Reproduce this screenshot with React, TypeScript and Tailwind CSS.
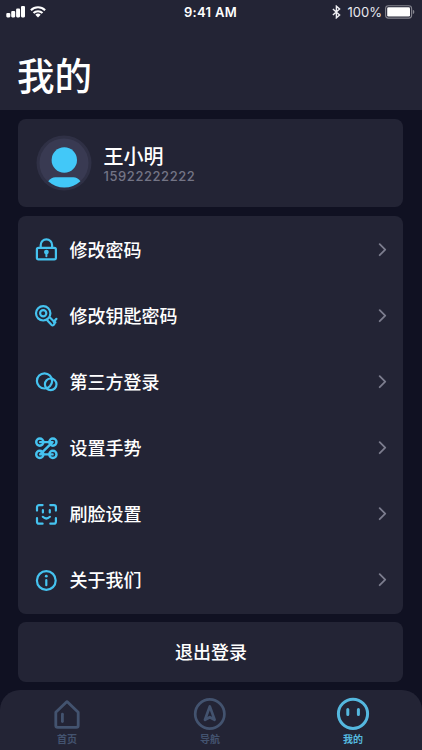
import type { ReactNode } from "react";

const CYAN = "#45c3f0";

function MenuSvg({ children }: { children: ReactNode }) {
  return (
    <svg width="24" height="24" viewBox="0 0 24 24" fill="none" stroke={CYAN} strokeWidth="2.2" strokeLinecap="round" strokeLinejoin="round" className="shrink-0">
      {children}
    </svg>
  );
}

const menu: { label: string; icon: ReactNode }[] = [
  {
    label: "修改密码",
    icon: (
      <MenuSvg>
        <rect x="2.9" y="9.8" width="19" height="11.6" rx="1.6" />
        <path d="M6.7 9.6V7a5.7 5.7 0 0 1 11.4 0V9.6" />
        <circle cx="12.4" cy="14.1" r="2.4" fill={CYAN} stroke="none" />
        <path d="M12.4 14.4v3.8" strokeWidth="2" />
      </MenuSvg>
    ),
  },
  {
    label: "修改钥匙密码",
    icon: (
      <MenuSvg>
        <circle cx="9.2" cy="9.3" r="7.2" />
        <circle cx="9.2" cy="9.3" r="3.1" />
        <path d="M13.4 16.5 17.4 20.7Q18.8 22.1 20 20.6T19.6 17.7L22.4 14.9M16.2 13.8 19.2 16.7M20 17.1 21.4 18.4" />
      </MenuSvg>
    ),
  },
  {
    label: "第三方登录",
    icon: (
      <MenuSvg>
        <circle cx="10.5" cy="10.9" r="7.6" />
        <circle cx="16.7" cy="14.3" r="5.8" />
      </MenuSvg>
    ),
  },
  {
    label: "设置手势",
    icon: (
      <MenuSvg>
        <circle cx="5.8" cy="6.1" r="3.6" strokeWidth="2.4" />
        <circle cx="18.9" cy="6.1" r="3.6" strokeWidth="2.4" />
        <circle cx="5.8" cy="18.4" r="3.6" strokeWidth="2.4" />
        <circle cx="18.9" cy="18.4" r="3.6" strokeWidth="2.4" />
        <path d="M6.1 6.1H18.6L6.1 18.4H18.6" strokeWidth="2.4" />
      </MenuSvg>
    ),
  },
  {
    label: "刷脸设置",
    icon: (
      <MenuSvg>
        <path d="M3 8.6V5.1a2 2 0 0 1 2-2H8.6M16.3 3.1h3.6a2 2 0 0 1 2 2V8.6M21.9 16.2v3.5a2 2 0 0 1-2 2H16.3M8.6 21.7H5a2 2 0 0 1-2-2V16.2" />
        <path d="M8.9 8.2v2.2M15.8 8.2v2.2M8.8 14.8q3.5 3.4 7.1 0" />
      </MenuSvg>
    ),
  },
  {
    label: "关于我们",
    icon: (
      <MenuSvg>
        <circle cx="12.3" cy="12.5" r="9.4" />
        <path d="M12.3 12v5.2" />
        <circle cx="12.3" cy="8.2" r="1.4" fill={CYAN} stroke="none" />
      </MenuSvg>
    ),
  },
];

function StatusBar() {
  return (
    <div className="grid h-[24px] grid-cols-3 items-center pl-[6px] pr-[7px] text-white">
      <div className="flex items-center gap-[4px]">
        <svg width="20" height="12" viewBox="0 0 20 12" fill="white">
          <rect x="0.3" y="7" width="4" height="4.4" rx="1.1" />
          <rect x="5.2" y="5" width="4" height="6.4" rx="1.1" />
          <rect x="10.1" y="2.6" width="4" height="8.8" rx="1.1" />
          <rect x="15" y="0" width="4" height="11.4" rx="1.1" />
        </svg>
        <svg width="16" height="12" viewBox="0 0 16 12" fill="none" stroke="white" strokeWidth="2.1">
          <path d="M0.9 4.2a10.2 10.2 0 0 1 14.2 0M3.5 7.1a6.4 6.4 0 0 1 9 0" />
          <path d="M8 11.5 5.3 8.8a3.8 3.8 0 0 1 5.4 0Z" fill="white" stroke="none" />
        </svg>
      </div>
      <div className="pt-[1px] text-center text-[13px] font-semibold tracking-[0.3px] whitespace-nowrap">9:41 AM</div>
      <div className="flex items-center justify-end">
        <svg width="9" height="14" viewBox="0 0 9 14" fill="none" stroke="#f0f0f4" strokeWidth="1.4" className="mr-[7px]">
          <path d="M0.9 3.9 7.6 9.9 4.4 12.8V1.2L7.6 4.1 0.9 10.1" />
        </svg>
        <span className="mr-[3px] pt-[1px] text-[13px] text-[#e8e8ee]">100%</span>
        <svg width="30" height="14" viewBox="0 0 30 14">
          <rect x="0.6" y="0.7" width="26" height="12.4" rx="2.8" fill="none" stroke="#85858f" strokeWidth="1.1" />
          <rect x="2.2" y="2.3" width="22.8" height="9.2" rx="1.3" fill="white" />
          <path d="M27.8 4.8q1.6.6 1.6 2.2t-1.6 2.2Z" fill="#85858f" />
        </svg>
      </div>
    </div>
  );
}

function Tab({ label, active, children }: { label: string; active?: boolean; children: ReactNode }) {
  return (
    <div className={`flex w-[60px] flex-col items-center ${active ? "text-[#55b8df]" : "text-[#43536f]"}`}>
      <svg width="34" height="34" viewBox="0 0 34 34" fill="none" stroke="currentColor" strokeWidth="3" strokeLinecap="round" strokeLinejoin="round">
        {children}
      </svg>
      <span className="mt-[1px] text-[10px] leading-[15px] font-bold">{label}</span>
    </div>
  );
}

export default function App() {
  return (
    <div className="flex h-[750px] w-[422px] flex-col overflow-hidden bg-[#101122] font-['Inter','Noto_Sans_CJK_SC',sans-serif] text-white">
      <header className="h-[110px] shrink-0 bg-[#232435]">
        <StatusBar />
        <h1 className="mt-[26px] ml-[17px] text-[37.5px] leading-[54px] font-medium">我的</h1>
      </header>

      <main className="flex flex-1 flex-col pr-[18.6px] pl-[18.4px]">
        <section className="mt-[9px] flex h-[88px] items-center rounded-[8px] bg-[#232435] pl-[18px]">
          <svg width="56" height="56" viewBox="0 0 56 56">
            <circle cx="28" cy="28" r="27.5" fill="#2f3045" />
            <circle cx="28" cy="28" r="24.5" fill="#393a52" />
            <circle cx="28.3" cy="25" r="12.7" fill="#42c8f8" />
            <path d="M12.2 46.2Q15.4 42.2 19.4 42.2H37.4Q41.4 42.2 44.4 46.2Q37.4 52.5 28.4 52.5T12.2 46.2Z" fill="#42c8f8" />
          </svg>
          <div className="ml-[11.2px] flex flex-col pt-[2px]">
            <span className="text-[20px] leading-[24px] font-medium">王小明</span>
            <span className="text-[13px] leading-[15px] font-medium tracking-[0.55px] text-[#737485]">15922222222</span>
          </div>
        </section>

        <section className="mt-[9px] flex h-[397.5px] flex-col rounded-[8px] bg-[#232435] pt-[0.5px] pr-[16.2px] pl-[15.6px]">
          {menu.map((item) => (
            <div key={item.label} className="flex flex-1 items-center">
              {item.icon}
              <span className="ml-[11.5px] flex-1 pt-[2px] text-[18px] leading-[26px] font-medium">{item.label}</span>
              <svg width="9" height="14" viewBox="0 0 9 14" fill="none" stroke="#7c7d8e" strokeWidth="1.8" strokeLinecap="round" strokeLinejoin="round">
                <path d="M1.7 1.2 7.2 6.7 1.7 12.2" />
              </svg>
            </div>
          ))}
        </section>

        <button className="mt-[8px] h-[60.5px] rounded-[8px] bg-[#232435] pt-[2px] text-[18px] font-medium">退出登录</button>
      </main>

      <nav className="flex h-[60px] shrink-0 justify-between rounded-t-[20px] bg-[#232435] pt-[7px] pr-[39px] pl-[37px]">
        <Tab label="首页">
          <path d="M17 4.6 28.2 15.2V28.6a1.8 1.8 0 0 1-1.8 1.8H7.6a1.8 1.8 0 0 1-1.8-1.8V15.2Z" strokeWidth="2.8" />
          <path d="M12.4 17.2v7.4" strokeWidth="2.8" />
        </Tab>
        <Tab label="导航">
          <circle cx="16.8" cy="17" r="14.6" strokeWidth="2.7" />
          <path d="M16.8 9.4 21.6 22.8 16.8 20.2 12 22.8Z" strokeWidth="2.7" />
        </Tab>
        <Tab label="我的" active>
          <circle cx="17" cy="16.8" r="14.6" />
          <path d="M11.8 12.4v5M22.4 12.4v5" strokeWidth="3" />
        </Tab>
      </nav>
    </div>
  );
}
